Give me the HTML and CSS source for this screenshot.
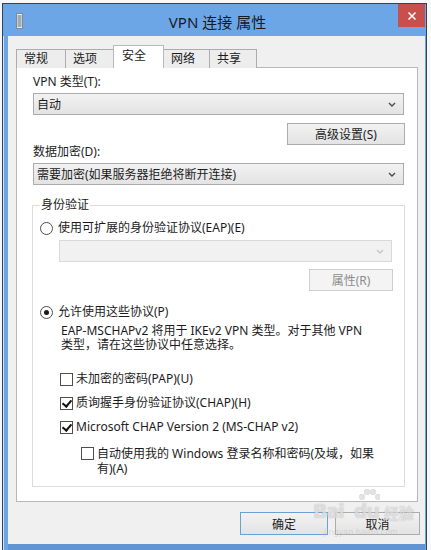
FILE: index.html
```html
<!DOCTYPE html>
<html lang="zh-CN">

<head>
    <meta charset="UTF-8">
    <title>VPN 连接 属性</title>
    <link rel="stylesheet" href="styles.css">
</head>

<body>
    <div class="window">
        <div class="titlebar">
            <svg class="app-icon" width="7" height="16" viewBox="0 0 7 16">
                <rect x="0.5" y="0.5" width="6" height="15" fill="#e8eef4" stroke="#7d8a96" />
                <path d="M1.5 3h4M1.5 5h4M1.5 7h4M1.5 9h4M1.5 11h4M1.5 13h4" stroke="#5d6873" stroke-width="1" />
            </svg>
            <span class="title">VPN 连接 属性</span>
            <button class="close-button" type="button">
                <svg width="10" height="10" viewBox="0 0 10 10">
                    <path d="M1.5 1.5l7 7M8.5 1.5l-7 7" stroke="#fff" stroke-width="1.5" />
                </svg>
            </button>
        </div>

        <div class="client">
            <div class="tabs">
                <div class="tab tab-1">常规</div>
                <div class="tab tab-2">选项</div>
                <div class="tab tab-3 active">安全</div>
                <div class="tab tab-4">网络</div>
                <div class="tab tab-5">共享</div>
            </div>

            <div class="panel">
                <div class="field-label">VPN 类型(T):</div>
                <div class="combo">
                    <span>自动</span>
                    <svg class="chevron" width="8" height="5" viewBox="0 0 8 5"><path d="M1 1l3 3 3-3" /></svg>
                </div>
                <div class="row-end">
                    <button type="button" class="btn btn-advanced">高级设置(S)</button>
                </div>

                <div class="field-label">数据加密(D):</div>
                <div class="combo">
                    <span>需要加密(如果服务器拒绝将断开连接)</span>
                    <svg class="chevron" width="8" height="5" viewBox="0 0 8 5"><path d="M1 1l3 3 3-3" /></svg>
                </div>

                <fieldset class="group">
                    <legend>身份验证</legend>

                    <label class="option">
                        <span class="radio"></span>使用可扩展的身份验证协议(EAP)(E)
                    </label>
                    <div class="eap-block">
                        <div class="combo disabled">
                            <span></span>
                            <svg class="chevron" width="8" height="5" viewBox="0 0 8 5"><path d="M1 1l3 3 3-3" /></svg>
                        </div>
                        <div class="row-end">
                            <button type="button" class="btn btn-props" disabled>属性(R)</button>
                        </div>
                    </div>

                    <label class="option option-allow">
                        <span class="radio checked"></span>允许使用这些协议(P)
                    </label>
                    <p class="note">EAP-MSCHAPv2 将用于 IKEv2 VPN 类型。对于其他 VPN<br>类型，请在这些协议中任意选择。</p>

                    <div class="check-list">
                        <label class="option">
                            <span class="checkbox"></span>未加密的密码(PAP)(U)
                        </label>
                        <label class="option">
                            <span class="checkbox checked"></span>质询握手身份验证协议(CHAP)(H)
                        </label>
                        <label class="option">
                            <span class="checkbox checked"></span>Microsoft CHAP Version 2 (MS-CHAP v2)
                        </label>
                        <label class="option option-sub">
                            <span class="checkbox"></span><span>自动使用我的 Windows 登录名称和密码(及域，如果<br>有)(A)</span>
                        </label>
                    </div>
                </fieldset>
            </div>

            <div class="actions">
                <button type="button" class="btn btn-ok">确定</button>
                <button type="button" class="btn btn-cancel">取消</button>
            </div>

            <div class="watermark">
                <span class="paw"></span>
                <span class="wm-bai">Bai</span><span class="wm-du">du</span><span class="wm-jy">经验</span>
                <span class="wm-url">jingyan.baidu.com</span>
            </div>
        </div>
    </div>
</body>

</html>
```

FILE: styles.css
```css
:root {
    /* Window chrome */
    --frame-blue: rgb(108, 166, 231);
    --frame-blue-dark: rgb(96, 148, 210);
    --frame-edge: rgb(52, 66, 84);
    --close-red: rgb(199, 80, 76);

    /* Dialog */
    --dialog-bg: #f0f0f0;
    --panel-bg: #ffffff;
    --panel-border: #b9b9b9;
    --group-border: #dcdcdc;
    --ctrl-border: #acacac;
    --ctrl-top: #f2f2f2;
    --ctrl-bottom: #e3e3e3;
    --text: #1c1c1c;
    --text-disabled: #8d8d8d;

    --ui-font: "Noto Sans", "Noto Sans CJK SC", sans-serif;
}

html,
body {
    margin: 0;
    padding: 0;
    height: 100%;
    overflow: hidden;
    background-color: #f7f8fa;
}

body {
    font-family: var(--ui-font);
    font-size: 12px;
    color: var(--text);
}

.window {
    width: 425px;
    margin: 3px 0 0 2px;
    box-sizing: border-box;
    border: 1px solid var(--frame-edge);
    border-bottom: none;
    background: linear-gradient(to right, #cfe2f6 0, #cfe2f6 1px, var(--frame-blue) 1px);
    padding-bottom: 10px;
}

.titlebar {
    height: 32px;
    display: grid;
    grid-template-columns: 1fr auto 1fr;
    align-items: start;
    background-color: var(--frame-blue);
}

.app-icon {
    margin: 9px 0 0 13px;
}

.title {
    font-size: 15px;
    line-height: 20px;
    padding: 8px 0 0 6px;
    color: #1a1a1a;
    white-space: nowrap;
}

.close-button {
    justify-self: end;
    width: 27px;
    height: 23px;
    margin-right: 1px;
    padding: 0;
    border: none;
    background-color: var(--close-red);
    display: flex;
    align-items: center;
    justify-content: center;
}

.client {
    position: relative;
    margin: 0 1px 0 5px;
    height: 508px;
    box-sizing: border-box;
    padding: 9px 7px 0 8px;
    background-color: var(--dialog-bg);
    box-shadow: 0 6px 0 var(--frame-blue-dark);
}

/* tabs */

.tabs {
    display: flex;
    align-items: flex-end;
    height: 23px;
    margin-bottom: -1px;
}

.tab {
    box-sizing: border-box;
    height: 19px;
    margin-left: -1px;
    padding-left: 7px;
    line-height: 18px;
    border: 1px solid var(--ctrl-border);
    border-bottom: none;
    background-color: #ededed;
}

.tab-1 { width: 50px; margin-left: 0; }
.tab-2 { width: 49px; }
.tab-3 { width: 51px; }
.tab-4 { width: 47px; }
.tab-5 { width: 48px; }

.tab.active {
    position: relative;
    height: 23px;
    line-height: 20px;
    padding-left: 8px;
    background-color: var(--panel-bg);
    border-color: var(--panel-border);
}

.panel {
    height: 435px;
    box-sizing: border-box;
    padding: 7px 13px 0 16px;
    background-color: var(--panel-bg);
    border: 1px solid var(--panel-border);
}

.field-label {
    line-height: 14px;
    height: 14px;
    margin-bottom: 4px;
}

.combo {
    height: 22px;
    box-sizing: border-box;
    display: flex;
    align-items: center;
    justify-content: space-between;
    padding: 0 7px 0 3px;
    border: 1px solid var(--ctrl-border);
    background: linear-gradient(var(--ctrl-top), var(--ctrl-bottom));
    white-space: nowrap;
}

.chevron path {
    fill: none;
    stroke: #4a4a4a;
    stroke-width: 1.4;
}

.combo.disabled {
    border-color: #d9d9d9;
    background: #f1f1f1;
}

.combo.disabled .chevron path {
    stroke: #c4c4c4;
}

.row-end {
    display: flex;
    justify-content: flex-end;
    margin-top: 8px;
}

.btn {
    height: 22px;
    box-sizing: border-box;
    padding: 0;
    font-family: var(--ui-font);
    font-size: 12px;
    color: var(--text);
    border: 1px solid var(--ctrl-border);
    background: linear-gradient(var(--ctrl-top), var(--ctrl-bottom));
}

.btn-advanced {
    width: 118px;
    margin-right: -1px;
}

.btn:disabled {
    color: var(--text-disabled);
    border-color: #cfcfcf;
    background: #f4f4f4;
}

.btn-props {
    width: 84px;
    margin-right: -1px;
}

/* authentication group */

.group {
    margin: 13px -1px 0 -1px;
    padding: 8px 12px 10px 7px;
    min-width: 0;
    border: 1px solid var(--group-border);
}

.group legend {
    padding: 0 1px;
    line-height: 14px;
}

.option {
    display: flex;
    align-items: center;
    line-height: 16px;
    white-space: nowrap;
}

.radio,
.checkbox {
    flex: none;
    width: 13px;
    height: 13px;
    box-sizing: border-box;
    border: 1px solid #4d4d4d;
    background-color: #fff;
    margin-right: 5px;
}

.radio {
    border-radius: 50%;
    display: flex;
    align-items: center;
    justify-content: center;
}

.radio.checked::after {
    content: "";
    width: 5px;
    height: 5px;
    border-radius: 50%;
    background-color: #1a1a1a;
}

.checkbox {
    margin-right: 3px;
    position: relative;
}

.checkbox.checked::after {
    content: "";
    position: absolute;
    left: 3px;
    top: 0px;
    width: 4px;
    height: 7px;
    border: solid #111;
    border-width: 0 2px 2px 0;
    transform: rotate(40deg);
}

.eap-block {
    margin: 4px 0 0 19px;
}

.eap-block .row-end {
    margin-top: 7px;
}

.option-allow {
    margin-top: 13px;
}

.note {
    margin: 4px 0 0 21px;
    line-height: 14px;
}

.check-list {
    display: flex;
    flex-direction: column;
    gap: 8px;
    margin: 19px 0 0 20px;
}

.option-sub {
    align-items: flex-start;
    margin: 3px 0 0 21px;
    line-height: 15px;
    white-space: normal;
}

.option-sub .checkbox {
    margin-top: 1px;
}

/* bottom buttons */

.actions {
    display: flex;
    justify-content: flex-end;
    gap: 7px;
    margin: 10px -2px 0 0;
}

.actions .btn {
    height: 23px;
}

.btn-ok {
    width: 88px;
    border-color: #6c9fd4;
}

.btn-cancel {
    width: 85px;
}

/* page watermark */

.watermark {
    position: absolute;
    left: 300px;
    top: 452px;
    width: 112px;
    height: 52px;
    pointer-events: none;
    font-family: "DejaVu Sans", sans-serif;
    font-weight: bold;
    color: rgba(255, 255, 255, 0.6);
    text-shadow: 0 0 1px rgba(120, 120, 120, 0.6);
}

.wm-bai,
.wm-du {
    position: absolute;
    top: 12px;
    font-size: 19px;
    letter-spacing: -1px;
}

.wm-bai { left: 5px; }
.wm-du { left: 46px; }

.wm-jy {
    position: absolute;
    left: 76px;
    top: 14px;
    font-size: 15px;
    font-family: "Noto Sans CJK SC", sans-serif;
}

.paw {
    position: absolute;
    left: 50px;
    top: 0;
    width: 22px;
    height: 14px;
    background:
        radial-gradient(circle at 4px 9px, rgba(190, 190, 190, 0.45) 3px, transparent 3.5px),
        radial-gradient(circle at 9px 4px, rgba(190, 190, 190, 0.45) 3px, transparent 3.5px),
        radial-gradient(circle at 15px 4px, rgba(190, 190, 190, 0.45) 3px, transparent 3.5px),
        radial-gradient(circle at 20px 9px, rgba(190, 190, 190, 0.45) 3px, transparent 3.5px);
}

.wm-url {
    position: absolute;
    left: 16px;
    top: 40px;
    font-size: 8px;
    font-weight: normal;
    color: rgba(170, 170, 170, 0.35);
    text-shadow: none;
}
```
